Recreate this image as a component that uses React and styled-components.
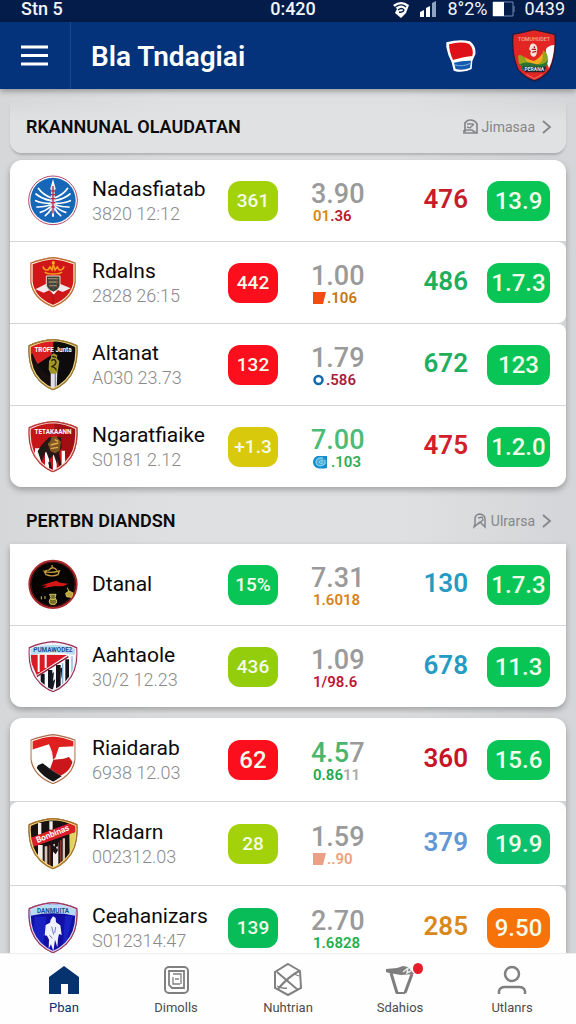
import styled, { createGlobalStyle, css } from "styled-components";

const GlobalStyle = createGlobalStyle`
	* {
		box-sizing: border-box;
	}

	body {
		margin: 0;
		background: #dadbdd;
		font-family: Roboto, "Liberation Sans", sans-serif;
		color: #0b0b0b;
	}

	ul {
		margin: 0;
		padding: 0;
		list-style: none;
	}

	a {
		color: inherit;
		text-decoration: none;
	}

	button {
		padding: 0;
		border: 0;
		background: none;
		font: inherit;
		color: inherit;
		cursor: pointer;
	}
`;

const GREEN = "#08c556";
const RED = "#fb0f1c";
const LIME = "#a3d20a";
const GREY = "#9a9a9a";

const SHIELD =
	"M75 3Q112 5 148 22Q154 92 116 130Q98 148 75 157Q52 148 34 130Q-4 92 2 22Q38 5 75 3Z";
const ROUND_SHIELD =
	"M75 3Q105 6 143 20L143 78Q136 130 75 154Q14 130 7 78L7 20Q45 6 75 3Z";

const Banner = ({ children, fill = "#fff", ...props }) => (
	<text
		x="75"
		y="43"
		textAnchor="middle"
		fontSize="19"
		fontWeight="700"
		fill={fill}
		{...props}
	>
		{children}
	</text>
);

const CrestSvg = styled.svg`
	display: block;
	width: 50px;
	height: 53px;
`;

const Crest = ({ id, outline, border, fill, shape = SHIELD, children }) => (
	<CrestSvg viewBox="0 0 150 159" aria-hidden="true">
		<clipPath id={id}>
			<path d={shape} />
		</clipPath>
		<path d={shape} fill={fill} />
		<g clipPath={`url(#${id})`}>
			{children}
			<path d={shape} fill="none" stroke={border} strokeWidth="14" />
			<path d={shape} fill="none" stroke={outline} strokeWidth="7" />
		</g>
	</CrestSvg>
);

const EagleCrest = () => (
	<CrestSvg viewBox="0 0 150 159" aria-hidden="true">
		<circle cx="75" cy="79" r="73" fill="#fff" stroke="#b4476a" strokeWidth="3" />
		<circle cx="75" cy="79" r="68" fill="#1767b8" />
		<g fill="none" stroke="#fff" strokeWidth="5" strokeLinecap="round">
			<path d="M70 72Q44 62 31 43M69 80Q40 74 24 60M68 88Q42 88 23 80M67 93Q44 100 27 99M68 98Q50 112 37 115M71 102Q62 118 52 125" />
			<path d="M80 72Q106 62 119 43M81 80Q110 74 126 60M82 88Q108 88 127 80M83 93Q106 100 123 99M82 98Q100 112 113 115M79 102Q88 118 98 125" />
			<path d="M75 48V126M70 44L75 26L80 44" strokeWidth="6" />
		</g>
		<path d="M70 38L79 38L83 98L75 124L67 98Z" fill="#d9dff0" />
		<path
			d="M75 36V118M70 51H80M69 62H81M68 74H82M68 86H82M70 99H80"
			stroke="#bd294a"
			strokeWidth="4"
		/>
	</CrestSvg>
);

const CrownCrest = () => (
	<Crest id="crown" fill="#cf1618" outline="#b86a2b" border="#fff0d8" shape={ROUND_SHIELD}>
		<path d="M22 100L58 82L92 82L128 97L104 108L77 97L47 110Z" fill="#f3e8eb" />
		<path d="M60 97L77 107L94 97L77 116Z" fill="#fff" />
		<path d="M75 114V148" stroke="#9e1516" strokeWidth="3" />
		<path d="M55 60H96V88Q93 102 76 108Q58 102 55 88Z" fill="#39443e" stroke="#eadcc6" strokeWidth="3" />
		<path d="M60 68H91M62 78H89M64 89H87" stroke="#8b9b79" strokeWidth="4" />
		<path d="M66 65V95M76 65V99M86 65V95" stroke="#9d4638" strokeWidth="2" />
		<path
			d="M50 48Q56 54 76 54Q96 54 102 48M45 31Q47 43 60 42L66 33L72 42L76 26L81 42L88 33L94 42Q105 43 108 31"
			fill="none"
			stroke="#f79c1c"
			strokeWidth="5"
		/>
		<circle cx="76" cy="20" r="5" fill="#f7ad23" />
	</Crest>
);

const SwordCrest = () => (
	<Crest id="sword" fill="#0d0b0b" outline="#9c7433" border="#ead57e">
		<path d="M0 0H78L71 50L8 92Z" fill="#d71f20" />
		<path d="M4 65Q25 105 68 149L66 118Q34 98 12 44Z" fill="#17100f" />
		<path d="M68 100H88L86 155L77 160L68 152Z" fill="#e2e0ea" />
		<path d="M82 104V150" stroke="#8d8798" strokeWidth="4" />
		<path d="M69 52L77 46L88 52L86 61L94 70L90 97L84 107H69L62 95L63 69L69 60Z" fill="#a29726" />
		<path d="M70 68Q82 60 84 73Q82 82 70 86Q82 87 85 97M72 55L84 58" fill="none" stroke="#25230b" strokeWidth="4" />
		<Banner>TROFE Junta</Banner>
	</Crest>
);

const FistCrest = () => (
	<Crest id="fist" fill="#c51517" outline="#b73834" border="#f3d5cf">
		<path d="M75 0H150V90L120 125L94 74Z" fill="#a20f13" />
		<path d="M21 85H40V130H21ZM51 96H63V150H51ZM75 100H86V155H75ZM101 92H111V142H101Z" fill="#fff" />
		<path d="M40 76L63 52L99 52L101 82L91 106L87 132L77 104L64 120L54 94L40 126L29 94Z" fill="#271716" />
		<path d="M63 80Q55 70 66 65L71 51L84 48L99 66L95 92L81 100L67 93Z" fill="#7f5521" />
		<path d="M68 75L91 69M68 86L90 82M80 59L91 64" stroke="#e0af50" strokeWidth="4" />
		<path d="M90 103L98 144M64 126L70 154" stroke="#211211" strokeWidth="7" />
		<Banner>TETAKAANN</Banner>
	</Crest>
);

const LampCrest = () => (
	<CrestSvg viewBox="0 0 150 159" aria-hidden="true">
		<circle cx="75" cy="79" r="71" fill="#070504" stroke="#ad2a2c" strokeWidth="6" />
		<circle cx="75" cy="79" r="66" fill="none" stroke="#4e1414" strokeWidth="3" />
		<path
			d="M49 40Q69 47 94 39L90 50Q72 57 54 50ZM61 38Q74 21 87 37M73 29L72 21M50 40L59 36"
			fill="none"
			stroke="#c69b3a"
			strokeWidth="4"
		/>
		<path d="M39 83Q60 74 85 68L96 74L121 77Q105 88 82 84L43 91L58 82Z" fill="#d21715" />
		<path d="M65 109H84L81 119Q91 133 81 139H68Q59 131 69 119Z" fill="#78702a" stroke="#d2c757" strokeWidth="3" />
		<path d="M68 124H82M40 115V124M51 114V123" stroke="#d2c757" strokeWidth="3" />
		<path d="M113 106L123 99L135 105L131 118L116 116ZM118 89L122 99" fill="#bca439" stroke="#d6c44e" strokeWidth="3" />
	</CrestSvg>
);

const StripeCrest = () => (
	<Crest id="stripe" fill="#f8f9fc" outline="#9f3150" border="#e9eaf5">
		<path d="M8 44L117 45L26 105L8 65Z" fill="#dc1927" />
		<path d="M32 42V96M53 42V84" stroke="#fff" strokeWidth="6" />
		<path d="M38 101H50V148H38ZM60 90H73V154H60ZM84 75H98V151H84ZM112 58H123V128H112Z" fill="#11131b" />
		<path d="M71 102L78 96L75 123L82 117L75 148L64 143ZM96 86L103 82L100 118Z" fill="#171a24" />
		<path d="M132 49V111M104 70V136" stroke="#85b4db" strokeWidth="4" />
		<path d="M26 110L121 50" stroke="#8b1d34" strokeWidth="4" />
		<path d="M7 27Q75 2 143 27L139 45Q75 31 10 45Z" fill="#bcdcf0" />
		<Banner y="37" fill="#174f8f">
			PUMAWODEZ
		</Banner>
	</Crest>
);

const WaveCrest = () => (
	<Crest id="wave" fill="#fff" outline="#aa6b4b" border="#fff7ef" shape={ROUND_SHIELD}>
		<path d="M10 20Q75 0 141 20V40L93 42L80 76L63 34L11 50Z" fill="#df201e" />
		<path d="M58 35L73 61L75 80L82 74L91 45L72 60Z" fill="#de1f25" />
		<path d="M76 80L107 77L123 72L134 87Q125 117 98 128L66 108Z" fill="#cb171c" />
		<path d="M30 97L44 91L74 113L101 130L76 146Q46 133 26 105Z" fill="#171415" />
	</Crest>
);

const SashCrest = () => (
	<Crest id="sash" fill="#1a1111" outline="#a56c2a" border="#f3d779">
		<path d="M30 84H44V140H30ZM75 76H91V157H75ZM30 18H40V53H30ZM64 13H74V38H64Z" fill="#f2eee9" />
		<path d="M50 88H58V148H50ZM104 64H111V145H104Z" fill="#d8c2b6" />
		<path d="M65 85V148M98 70V140" stroke="#873329" strokeWidth="5" />
		<path d="M124 50L144 44V98L125 120Z" fill="#ded465" />
		<path d="M8 62L144 11V44L8 92Z" fill="#d91f29" />
		<path d="M75 76L83 65L91 75L90 100L83 112L74 103Z" fill="#1b1312" />
		<path d="M75 83L81 80L79 89ZM84 91L90 88L88 98Z" fill="#fff" />
		<Banner transform="rotate(-22 75 54)" y="59" fontSize="25">
			Bonbinas
		</Banner>
	</Crest>
);

const RiderCrest = () => (
	<Crest id="rider" fill="#1210a4" outline="#a63451" border="#d5dcf5">
		<path d="M8 20Q75 0 142 20V44Q75 30 8 44Z" fill="#b9dbf2" />
		<path d="M20 47H55L44 142L17 92ZM111 45H134L118 113L104 142Z" fill="#1921c3" />
		<path
			d="M68 56L75 46L83 51L84 64L97 73L101 102L93 99L90 113L88 139L81 116L76 151L69 130L62 144L63 116L57 104L50 103L53 72L66 65Z"
			fill="#f1f2ff"
		/>
		<path d="M71 77L77 101M83 78L80 96M65 103L73 112" stroke="#7279cf" strokeWidth="3" />
		<Banner y="36" fill="#1d4a93">
			DANMUITA
		</Banner>
	</Crest>
);

const TopBar = styled.div`
	display: grid;
	grid-template-columns: 1fr auto 1fr;
	align-items: center;
	height: 22px;
	padding: 0 11px 4px 21px;
	background: #031c49;
	color: #f2f5fb;
	font-size: 18px;
	line-height: 18px;
	font-weight: 500;
`;

const Indicators = styled.div`
	display: flex;
	align-items: center;
	justify-content: flex-end;
	gap: 10px;
	font-weight: 400;
`;

const Power = styled.span`
	display: flex;
	align-items: center;
	gap: 4px;
`;

const AppBar = styled.header`
	position: relative;
	display: flex;
	align-items: center;
	height: 67px;
	flex: none;
	padding-right: 20px;
	background: #04327b;
	box-shadow: 0 2px 6px rgba(0, 0, 0, 0.35);
	color: #fff;

	h1 {
		flex: 1;
		margin: 0;
		padding: 2px 0 0 20px;
		font-size: 28px;
		line-height: 32px;
		font-weight: 600;
	}
`;

const MenuButton = styled.button`
	display: flex;
	align-items: center;
	align-self: stretch;
	width: 71px;
	padding-left: 20px;
	border-right: 1px solid #1b498c;
`;

const HeaderButton = styled.button`
	display: flex;
	margin-left: 36px;
`;

const Screen = styled.div`
	display: flex;
	flex-direction: column;
	height: 100vh;
`;

const Content = styled.main`
	flex: 1;
	min-height: 0;
	overflow-y: auto;
	scrollbar-width: none;
	padding: 11px 10px 0;
	background: linear-gradient(90deg, #d6d7d9, #dfe0e1 30%, #dfe0e1 70%, #d4d5d8);
`;

const SectionHead = styled.div`
	display: flex;
	align-items: center;
	justify-content: space-between;
	height: 57px;
	padding: 10px 14px 0 16px;

	h2 {
		margin: 0;
		font-size: 18px;
		line-height: 24px;
		font-weight: 600;
	}

	${({ $raised }) =>
		$raised &&
		css`
			height: 53px;
			margin-bottom: 7px;
			padding-top: 0;
			border-radius: 0 0 12px 12px;
			background: linear-gradient(#dfe0e100, #e0e1e2 40%);
			box-shadow: 0 3px 3px -1px rgba(0, 0, 0, 0.22);
		`}
`;

const MoreLink = styled.a`
	display: flex;
	align-items: center;
	gap: 4px;
	color: #85868a;
	font-size: 14px;
	line-height: 20px;
`;

const Card = styled.ul`
	display: grid;
	gap: 1px;
	overflow: hidden;
	margin-bottom: ${({ $gap }) => $gap || 0}px;
	border-radius: ${({ $flatTop }) => ($flatTop ? "0 0 12px 12px" : "12px")};
	background: #d3d4d6;
	box-shadow: 0 3px 6px rgba(0, 0, 0, 0.28);
`;

const Row = styled.li`
	display: grid;
	grid-template-columns: 50px minmax(0, 1fr) 50px 90px 77px 63px;
	column-gap: 14px;
	align-items: center;
	height: ${({ $tall }) => ($tall ? 83 : 81)}px;
	padding: 0 16px 0 18px;
	border-radius: ${({ $corners }) => $corners || 0};
	background: #fff;
`;

const Team = styled.div`
	white-space: nowrap;

	h3 {
		margin: 0;
		font-size: 21px;
		line-height: 25px;
		font-weight: 400;
	}

	p {
		margin: 0;
		color: #8a8a8a;
		font-size: 18px;
		line-height: 23px;
		font-weight: 300;
	}
`;

const Badge = styled.span`
	display: flex;
	align-items: center;
	justify-content: center;
	height: 40px;
	border-radius: 12px;
	background: ${({ $color }) => $color};
	color: #f3fbe9;
	font-size: ${({ $large }) => ($large ? 24 : 19)}px;
	font-weight: 500;
`;

const Odds = styled.div`
	padding: 5px 0 0 19px;
	color: ${GREY};
	font-size: 27px;
	line-height: 26px;
	font-weight: 500;
`;

const Change = styled.div`
	display: flex;
	align-items: center;
	padding-left: 2px;
	font-size: 15px;
	line-height: 18px;
	font-weight: 600;

	svg {
		flex: none;
	}
`;

const Tint = styled.span`
	color: ${({ $color }) => $color};
`;

const Points = styled.div`
	padding: 0 5px 3px 0;
	color: ${({ $color }) => $color};
	font-size: 26px;
	font-weight: 600;
	text-align: right;
`;

const TabBar = styled.nav`
	display: flex;
	flex: none;
	height: 71px;
	padding: 9px 8px 0;
	border-top: 1px solid #eceded;
	background: #fefefe;
`;

const Tab = styled.a`
	display: flex;
	flex: 1;
	flex-direction: column;
	align-items: center;
	gap: 3px;
	color: ${({ $active }) => ($active ? "#06336d" : "#4c4c4c")};
	font-size: 13px;
	line-height: 16px;

	svg {
		display: block;
		color: ${({ $active }) => ($active ? "#06336d" : "#808080")};
	}
`;

const FlagMark = ({ color }) => (
	<svg width="14" height="14" viewBox="0 0 14 14" aria-hidden="true">
		<path d="M0 1H13L10 13H0Z" fill={color} />
	</svg>
);

const RingMark = () => (
	<svg width="13" height="14" viewBox="0 0 13 14" aria-hidden="true">
		<circle cx="5.500" cy="7" r="4" fill="none" stroke="#136bab" strokeWidth="2.500" />
	</svg>
);

const CoinMark = () => (
	<svg width="18" height="16" viewBox="0 0 18 16" aria-hidden="true">
		<path d="M4 2H14V14Q9 15 4 14Q0 12 0 8Q0 4 4 2Z" fill="#138dcc" />
		<path d="M10 4Q3 3 3 8Q3 12 8 12L12 10V6M6 8L9 6V10Z" fill="#9edcf4" fillOpacity=".4" stroke="#9edcf4" />
	</svg>
);

const Chevron = () => (
	<svg width="13" height="14" viewBox="0 0 13 14" aria-hidden="true">
		<path d="M4 1L11 7L4 13" fill="none" stroke="currentColor" strokeWidth="1.800" />
	</svg>
);

const PageIcon = () => (
	<svg width="15" height="16" viewBox="0 0 15 16" fill="none" stroke="currentColor" aria-hidden="true">
		<path d="M2 4Q4 1 7 1Q12 1 14 5V14H1V11M2 3V13M1 11H9L13 14" strokeWidth="1.700" />
		<path d="M4 5H10M4 8L7 9L11 5" strokeWidth="1.400" />
	</svg>
);

const RibbonIcon = () => (
	<svg width="14" height="16" viewBox="0 0 14 16" fill="none" stroke="currentColor" aria-hidden="true">
		<path d="M2 14V5Q3 1 7 1Q12 2 12 6V14L7 9L1 14L2 11" strokeWidth="1.500" />
		<path d="M5 5L9 4L10 7L5 11" strokeWidth="1.300" />
	</svg>
);

const WifiIcon = () => (
	<svg width="18" height="17" viewBox="0 0 18 17" aria-hidden="true">
		<path d="M1 4Q9-2 17 4L14 12L9 17L3 12L5 8Z" fill="#fff" />
		<path d="M1 8Q9 1 14 6M6 9Q10 6 12 9Q11 12 7 11" fill="none" stroke="#031c49" strokeWidth="1.300" />
	</svg>
);

const SignalIcon = () => (
	<svg width="17" height="16" viewBox="0 0 17 16" aria-hidden="true">
		<path d="M0 11L4 9V16H0ZM6 7L10 5V16H6Z" fill="#fff" />
		<path d="M12 2L16 0V16H12Z" fill="#8fa4c5" />
	</svg>
);

const BatteryIcon = () => (
	<svg width="23" height="16" viewBox="0 0 23 16" aria-hidden="true">
		<path d="M1 1H21V15H1Z" fill="none" stroke="#7189b2" />
		<path d="M1 1H12V15H1Z" fill="#fff" />
		<path d="M22 5V11" stroke="#7189b2" />
	</svg>
);

const MenuIcon = () => (
	<svg width="29" height="21" viewBox="0 0 29 21" aria-hidden="true">
		<path d="M1 2H28M1 10.500H28M1 19H28" stroke="#fff" strokeWidth="3" />
	</svg>
);

const GloveIcon = () => (
	<svg width="30" height="32" viewBox="0 0 90 96" aria-hidden="true">
		<path
			d="M1 7Q40-3 72 4Q91 18 88 43L79 63L77 87Q51 101 23 92L17 67Q5 45 1 22Z"
			fill="#fff"
		/>
		<path d="M9 13Q45 3 70 12Q84 27 79 48Q56 50 21 60Q10 38 9 13Z" fill="#df1118" />
		<path d="M24 68Q50 61 75 62L72 84Q51 92 29 87Z" fill="#1559ae" />
		<path d="M25 74Q49 82 73 70" fill="none" stroke="#78b0e0" strokeWidth="3" />
	</svg>
);

const ClubIcon = () => (
	<svg width="44" height="53" viewBox="0 0 132 159" aria-hidden="true">
		<path
			d="M66 2Q97 9 129 16Q134 78 113 123Q91 150 66 156Q38 146 18 122Q-2 78 3 16Q36 10 66 2Z"
			fill="#e12624"
			stroke="#182044"
			strokeWidth="4"
		/>
		<path d="M102 60Q112 48 127 48Q125 88 111 118L103 98Z" fill="#fff" />
		<path d="M18 80Q28 73 38 88Q57 105 71 99Q92 93 93 64Q108 70 108 94L101 119L31 117L20 101Z" fill="#93a41d" />
		<path d="M36 82Q46 91 66 96Q86 85 91 71Q98 103 67 108Q45 106 36 82Z" fill="#f2aa20" />
		<path d="M66 104Q98 112 109 91L99 125H32L24 105Q42 96 66 104Z" fill="#2b7236" />
		<path d="M53 55Q55 40 67 44Q79 50 75 68Q73 84 64 83Q51 80 57 66L51 61Z" fill="#f7e5dd" />
		<path d="M59 61H72M61 70L73 67M67 52V58" stroke="#bc1520" strokeWidth="4" />
		<path d="M33 113H102L97 130H40Z" fill="#1c2435" />
		<text x="67" y="127" textAnchor="middle" fontSize="15" fontWeight="700" fill="#dce8ed">PERANA</text>
		<path d="M43 136L67 149L91 136" fill="none" stroke="#f09b95" strokeWidth="2" />
		<text x="66" y="35" textAnchor="middle" fontSize="16" fontWeight="500" fill="#f7aaa0">TOMUHUDET</text>
	</svg>
);

const HomeIcon = () => (
	<svg width="32" height="34" viewBox="0 0 32 34" aria-hidden="true">
		<path d="M1 14L16 3L31 14V31H20V21H13V31H1Z" fill="currentColor" />
	</svg>
);

const NewsIcon = () => (
	<svg width="27" height="34" viewBox="0 0 27 34" fill="none" stroke="currentColor" aria-hidden="true">
		<rect x="2" y="4" width="23" height="26" rx="4" strokeWidth="2" />
		<path d="M6 8H21V25H9L6 22Z" strokeWidth="1.800" />
		<path d="M10 11H18V21M10 14V21H17M12 16H16" strokeWidth="1.300" />
	</svg>
);

const HexIcon = () => (
	<svg width="30" height="36" viewBox="0 0 30 36" fill="none" stroke="currentColor" aria-hidden="true">
		<path d="M15 2L27 9L28 26L15 33L2 26V10Z" strokeWidth="2" />
		<path d="M4 10L25 28M26 9Q15 15 5 27" strokeWidth="2" />
		<path d="M4 24Q9 27 14 26M21 12L26 14" strokeWidth="1.300" />
	</svg>
);

const CupIcon = () => (
	<svg width="30" height="34" viewBox="0 0 30 34" aria-hidden="true">
		<path d="M1 6L12 5L18 3L23 4L29 11L16 12L4 10L1 9Z" fill="#7e7e7e" />
		<path d="M11 30H20" stroke="#7e7e7e" strokeWidth="2" />
		<path d="M6 10L12 30M27 11L20 30" stroke="#7e7e7e" strokeWidth="3" />
		<path d="M18 9L23 5L22 10L26 8" fill="none" stroke="#eee" strokeWidth="1.500" />
	</svg>
);

const PersonIcon = () => (
	<svg width="30" height="34" viewBox="0 0 30 34" fill="none" stroke="currentColor" aria-hidden="true">
		<circle cx="15" cy="11" r="7" strokeWidth="2.500" />
		<path d="M2 31V28Q3 24 8 24H22Q27 24 28 28V31" strokeWidth="2.500" />
	</svg>
);

const IconHolder = styled.span`
	position: relative;
	display: flex;
	align-items: center;
	height: 34px;
`;

const Dot = styled.span`
	position: absolute;
	top: 0;
	right: -8px;
	width: 10px;
	height: 11px;
	border-radius: 50%;
	background: #e91c29;
`;

const groups = [
	{
		title: "RKANNUNAL OLAUDATAN",
		link: "Jimasaa",
		raised: true,
		teams: [
			{
				crest: EagleCrest, name: "Nadasfiatab", date: "3820 12:12", badge: "361", badgeColor: LIME,
				odds: [["3.90"]], change: [["01", "#d98713"], [".36", "#b8182d"]],
				points: "476", pointsColor: "#c61c2b", rate: "13.9",
			},
			{
				crest: CrownCrest, name: "Rdalns", date: "2828 26:15", badge: "442", badgeColor: RED,
				odds: [["1.00"]], mark: <FlagMark color="#f34b12" />, change: [[".106", "#c77512"]],
				points: "486", pointsColor: "#1eae5c", rate: "1.7.3", corners: "0 8px 8px 0",
			},
			{
				crest: SwordCrest, name: "Altanat", date: "A030 23.73", badge: "132", badgeColor: RED,
				odds: [["1.79"]], mark: <RingMark />, change: [[".586", "#a51e3d"]],
				points: "672", pointsColor: "#1eae5c", rate: "123", corners: "0 8px 0 0",
			},
			{
				crest: FistCrest, name: "Ngaratfiaike", date: "S0181 2.12", badge: "+1.3", badgeColor: "#d9c90d",
				odds: [["7.00", "#4dbb78"]], mark: <CoinMark />, change: [[".103", "#2eae54"]],
				points: "475", pointsColor: "#d2202b", rate: "1.2.0",
			},
		],
	},
	{
		title: "PERTBN DIANDSN",
		link: "Ulrarsa",
		gap: 11,
		teams: [
			{
				crest: LampCrest, name: "Dtanal", badge: "15%", badgeColor: GREEN,
				odds: [["7.31"]], change: [["1.6018", "#d88317"]],
				points: "130", pointsColor: "#259bc4", rate: "1.7.3",
			},
			{
				crest: StripeCrest, name: "Aahtaole", date: "30/2 12.23", badge: "436", badgeColor: "#94cd0c",
				odds: [["1.09"]], change: [["1/98.6", "#bd1638"]],
				points: "678", pointsColor: "#259bc4", rate: "11.3",
			},
		],
	},
	{
		tall: true,
		teams: [
			{
				crest: WaveCrest, name: "Riaidarab", date: "6938 12.03", badge: "62", badgeColor: RED, badgeLarge: true,
				odds: [["4.5", "#48b66f"], ["7"]], change: [["0.86", "#22aa50"], ["11", "#aaa"]],
				points: "360", pointsColor: "#c71526", rate: "15.6",
			},
			{
				crest: SashCrest, name: "Rladarn", date: "002312.03", badge: "28", badgeColor: LIME,
				odds: [["1.59"]], mark: <FlagMark color="#e9a087" />, change: [["..90", "#eba181"]],
				points: "379", pointsColor: "#6297d6", rate: "19.9", rateColor: "#0bc16b", corners: "8px 8px 0 0",
			},
			{
				crest: RiderCrest, name: "Ceahanizars", date: "S012314:47", badge: "139", badgeColor: "#08bc58",
				odds: [["2.70"]], change: [["1.6828", "#23ae4c"]],
				points: "285", pointsColor: "#d98919", rate: "9.50", rateColor: "#f77208", corners: "0 8px 0 0",
			},
		],
	},
];

const tabs = [
	{ label: "Pban", icon: HomeIcon },
	{ label: "Dimolls", icon: NewsIcon },
	{ label: "Nuhtrian", icon: HexIcon },
	{ label: "Sdahios", icon: CupIcon, dot: true },
	{ label: "Utlanrs", icon: PersonIcon },
];

const tinted = (parts) =>
	parts.map(([text, color]) => (
		<Tint key={text} $color={color}>
			{text}
		</Tint>
	));

const TeamRow = ({ team, tall }) => {
	const Logo = team.crest;

	return (
		<Row $tall={tall} $corners={team.corners}>
			<Logo />
			<Team>
				<h3>{team.name}</h3>
				{team.date && <p>{team.date}</p>}
			</Team>
			<Badge $color={team.badgeColor} $large={team.badgeLarge}>
				{team.badge}
			</Badge>
			<Odds>
				{tinted(team.odds)}
				<Change>
					{team.mark}
					{tinted(team.change)}
				</Change>
			</Odds>
			<Points $color={team.pointsColor}>{team.points}</Points>
			<Badge $color={team.rateColor || GREEN} $large>
				{team.rate}
			</Badge>
		</Row>
	);
};

const App = () => (
	<Screen>
		<GlobalStyle />
		<TopBar>
			<span>Stn 5</span>
			<span>0:420</span>
			<Indicators>
				<WifiIcon />
				<SignalIcon />
				<Power>
					8°2%
					<BatteryIcon />
				</Power>
				<span>0439</span>
			</Indicators>
		</TopBar>
		<AppBar>
			<MenuButton type="button" aria-label="Menu">
				<MenuIcon />
			</MenuButton>
			<h1>Bla Tndagiai</h1>
			<HeaderButton type="button" aria-label="Glove">
				<GloveIcon />
			</HeaderButton>
			<HeaderButton type="button" aria-label="Club">
				<ClubIcon />
			</HeaderButton>
		</AppBar>
		<Content>
			{groups.map(({ title, link, raised, gap, tall, teams }) => (
				<section key={title || "more"}>
					{title && (
						<SectionHead $raised={raised}>
							<h2>{title}</h2>
							<MoreLink href="#more">
								{raised ? <PageIcon /> : <RibbonIcon />}
								{link}
								<Chevron />
							</MoreLink>
						</SectionHead>
					)}
					<Card $gap={gap} $flatTop={title && !raised}>
						{teams.map((team) => (
							<TeamRow key={team.name} team={team} tall={tall} />
						))}
					</Card>
				</section>
			))}
		</Content>
		<TabBar>
			{tabs.map(({ label, icon: Icon, dot }, index) => (
				<Tab key={label} href={`#${label}`} $active={index === 0}>
					<IconHolder>
						<Icon />
						{dot && <Dot />}
					</IconHolder>
					{label}
				</Tab>
			))}
		</TabBar>
	</Screen>
);

export default App;
